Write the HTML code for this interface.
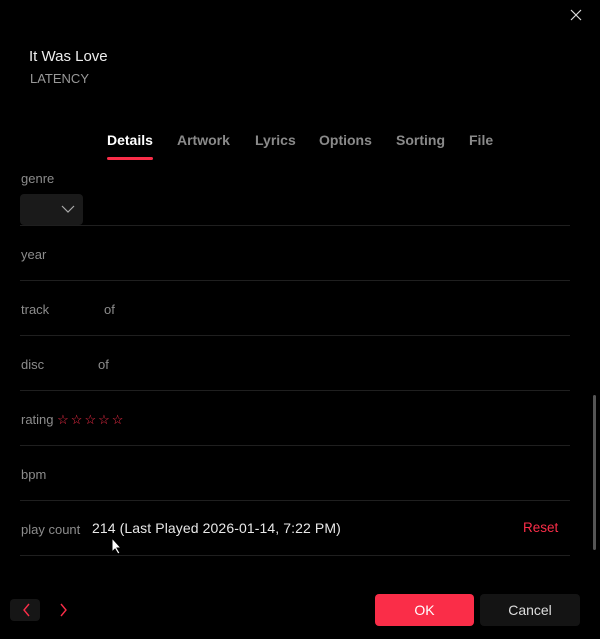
<!DOCTYPE html>
<html><head><style>
*{margin:0;padding:0;box-sizing:border-box}
body{width:600px;height:639px;background:#000;font-family:"Liberation Sans",sans-serif;position:relative;overflow:hidden;color:#8a8a8a}
.a{position:absolute}
.sep{position:absolute;left:20px;width:550px;height:1px;background:#1f1f1f}
.lbl{position:absolute;left:21px;font-size:13px;color:#8c8c8c}
.tab{position:absolute;top:132px;font-size:14px;font-weight:bold;color:#8a8a8a}
</style></head><body>
<svg class="a" style="left:570px;top:9px" width="12" height="12"><path d="M1 1L11 11M11 1L1 11" stroke="#ddd" stroke-width="1.2"/></svg>
<div class="a" style="left:29px;top:48px;font-size:15px;color:#eee">It Was Love</div>
<div class="a" style="left:30px;top:71px;font-size:13px;color:#999">LATENCY</div>
<div class="tab" style="left:107px;color:#fff">Details</div>
<div class="a" style="left:107px;top:157px;width:46px;height:3px;background:#fa2d48;border-radius:2px"></div>
<div class="tab" style="left:177px">Artwork</div>
<div class="tab" style="left:255px">Lyrics</div>
<div class="tab" style="left:319px">Options</div>
<div class="tab" style="left:396px">Sorting</div>
<div class="tab" style="left:469px">File</div>
<div class="lbl" style="top:171px">genre</div>
<div class="a" style="left:20px;top:194px;width:63px;height:31px;background:#1a1a1a;border-radius:4px"></div>
<svg class="a" style="left:61px;top:205px" width="14" height="8"><path d="M1 1L7 7L13 1" stroke="#aaa" fill="none" stroke-width="1.2"/></svg>
<div class="sep" style="top:225px"></div>
<div class="lbl" style="top:247px">year</div>
<div class="sep" style="top:280px"></div>
<div class="lbl" style="top:302px">track</div><div class="lbl" style="top:302px;left:104px">of</div>
<div class="sep" style="top:335px"></div>
<div class="lbl" style="top:357px">disc</div><div class="lbl" style="top:357px;left:98px">of</div>
<div class="sep" style="top:390px"></div>
<div class="lbl" style="top:412px">rating <span style="color:#fa2d48;font-size:13px;letter-spacing:2px">☆☆☆☆☆</span></div>
<div class="sep" style="top:445px"></div>
<div class="lbl" style="top:467px">bpm</div>
<div class="sep" style="top:500px"></div>
<div class="lbl" style="top:522px">play count</div>
<div class="a" style="left:92px;top:520px;font-size:14px;color:#e8e8e8;letter-spacing:0.1px">214 (Last Played 2026-01-14, 7:22 PM)</div>
<div class="a" style="left:523px;top:520px;font-size:13.5px;color:#fa2d48">Reset</div>
<svg class="a" style="left:111px;top:537px" width="12" height="18"><path d="M1 1L1 15L4 12L7 17L9 16L6 11L10 11Z" fill="#fff" stroke="#000" stroke-width="1"/></svg>
<div class="sep" style="top:555px"></div>
<div class="a" style="left:593px;top:395px;width:3px;height:155px;background:#555;border-radius:2px"></div>
<div class="a" style="left:10px;top:599px;width:30px;height:22px;background:#161616;border-radius:4px"></div>
<svg class="a" style="left:23px;top:603px" width="8" height="14"><path d="M6 1L1 7L6 13" stroke="#fa2d48" fill="none" stroke-width="1.4"/></svg>
<svg class="a" style="left:59px;top:603px" width="8" height="14"><path d="M2 1L7 7L2 13" stroke="#fa2d48" fill="none" stroke-width="1.4"/></svg>
<div class="a" style="left:375px;top:594px;width:99px;height:32px;background:#fa2d48;border-radius:4px;color:#fff;font-size:14px;text-align:center;line-height:32px">OK</div>
<div class="a" style="left:480px;top:594px;width:100px;height:32px;background:#141414;border-radius:4px;color:#ddd;font-size:14px;text-align:center;line-height:32px">Cancel</div>
</body></html>
